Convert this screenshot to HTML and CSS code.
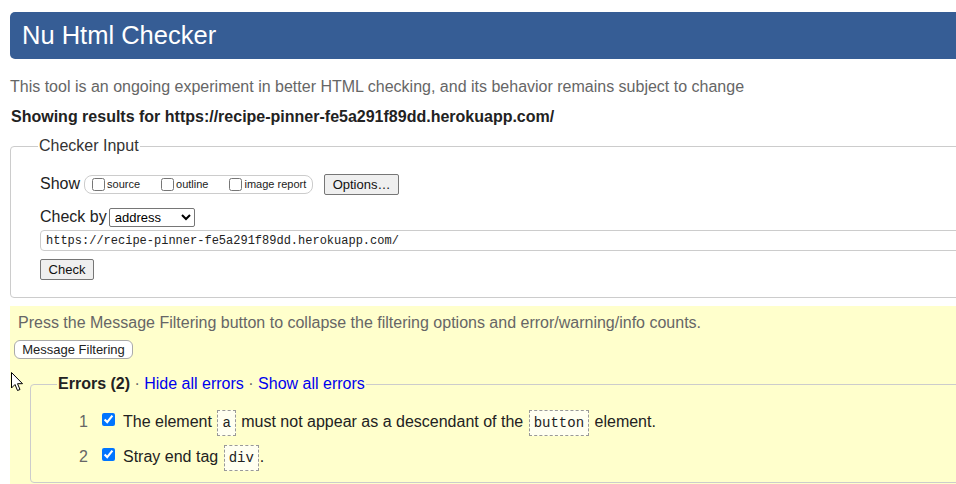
FILE: index.html
```html
<!DOCTYPE html>
<html lang="en">
<head>
<meta charset="utf-8">
<title>Nu Html Checker</title>
<link rel="stylesheet" href="styles.css">
</head>
<body>
<div class="page">
  <h1 class="title">Nu Html Checker</h1>
  <p class="intro">This tool is an ongoing experiment in better HTML checking, and its behavior remains subject to change</p>
  <p class="showing">Showing results for https://recipe-pinner-fe5a291f89dd.herokuapp.com/</p>

  <fieldset class="panel">
    <legend class="panel-legend">Checker Input</legend>
    <div class="row">
      <span class="row-label">Show</span>
      <span class="opts">
        <label class="opt"><input type="checkbox" class="cb"><span>source</span></label>
        <label class="opt"><input type="checkbox" class="cb"><span>outline</span></label>
        <label class="opt"><input type="checkbox" class="cb"><span>image report</span></label>
      </span>
      <button class="btn btn-options">Options…</button>
    </div>
    <div class="row row-by">
      <span class="row-label by-label">Check by</span>
      <select class="sel"><option>address</option></select>
    </div>
    <input class="url" type="text" value="https://recipe-pinner-fe5a291f89dd.herokuapp.com/">
    <div class="row-check"><button class="btn btn-check">Check</button></div>
  </fieldset>

  <div class="filters">
    <p class="filter-note">Press the Message Filtering button to collapse the filtering options and error/warning/info counts.</p>
    <button class="btn-filter">Message Filtering</button>
    <fieldset class="errors">
      <legend class="errors-legend"><strong>Errors (2)</strong> · <a href="#">Hide all errors</a> · <a href="#">Show all errors</a></legend>
      <ol class="list">
        <li class="item"><span class="num">1</span><input type="checkbox" class="cb-on" checked><span>The element <code>a</code> must not appear as a descendant of the <code>button</code> element.</span></li>
        <li class="item"><span class="num">2</span><input type="checkbox" class="cb-on" checked><span>Stray end tag <code>div</code>.</span></li>
      </ol>
    </fieldset>
  </div>
</div>
<svg class="cursor" width="13" height="20" viewBox="0 0 13 20"><path d="M0.5 0.5 L0.5 16 L4 12.5 L6.5 18.5 L9 17.5 L6.5 11.7 L11.5 11.7 Z" fill="#fff" stroke="#000" stroke-width="1" stroke-linejoin="miter"/></svg>
</body>
</html>
```

FILE: styles.css
```css
html, body {
  margin: 0;
  padding: 0;
  background: #fff;
  overflow: hidden;
}
body {
  font-family: "Liberation Sans", Arial, sans-serif;
  font-size: 16px;
  color: #222;
  position: relative;
  height: 484px;
}
.page {
  width: 1100px;
  padding: 12px 0 0 10px;
}
.title {
  margin: 0;
  height: 47px;
  background: #365d95;
  color: #fff;
  font-weight: normal;
  font-size: 25.5px;
  line-height: 47px;
  padding-left: 12px;
  border-radius: 5px;
}
.intro {
  margin: 18px 0 0 0;
  color: #666;
  line-height: 20px;
}
.showing {
  margin: 10px 0 0 1px;
  font-weight: bold;
  line-height: 20px;
}
.panel {
  margin: 10px 0 0 0;
  border: 1px solid #ccc;
  border-radius: 4px;
  padding: 6px 0 17px 29px;
  min-width: 0;
}
.panel-legend {
  margin-left: -2px;
  padding: 0 1px;
  color: #333;
  font-size: 16px;
}
.row {
  display: flex;
  align-items: center;
  height: 22px;
  margin-top: 12px;
}
.row-label {
  margin-right: 4px;
}
.by-label {
  margin-right: 2px;
}
.opts {
  display: flex;
  align-items: center;
  height: 17px;
  border: 1px solid #ccc;
  border-radius: 8px;
  padding: 0 5px 0 7px;
  width: 215px;
  box-sizing: content-box;
}
.opt {
  display: flex;
  align-items: center;
  font-size: 11px;
  margin-right: 21px;
}
.opt:last-child { margin-right: 0; }
.cb {
  width: 13px;
  height: 13px;
  margin: 0 2px 0 0;
}
.btn {
  font-family: "Liberation Sans", Arial, sans-serif;
  font-size: 13px;
  color: #111;
  background: #efefef;
  border: 1px solid #767676;
  border-radius: 2px;
  padding: 0 6px;
  height: 21px;
}
.btn-options {
  margin-left: 11px;
  width: 75px;
}
.row-by {
  margin-top: 12px;
  height: 20px;
}
.sel {
  font-family: "Liberation Sans", Arial, sans-serif;
  font-size: 13px;
  width: 86px;
  height: 19px;
  padding: 0 0 0 1px;
  border: 1px solid #767676;
  border-radius: 2px;
  background: #fff;
  color: #000;
}
.url {
  display: block;
  box-sizing: border-box;
  margin-top: 3px;
  width: 1000px;
  height: 21px;
  border: 1px solid #ccc;
  border-radius: 4px;
  padding: 0 5px;
  font-family: "Liberation Mono", monospace;
  font-size: 12px;
  color: #222;
  background: #fff;
}
.row-check {
  margin-top: 8px;
}
.btn-check {
  width: 54px;
  height: 21px;
  font-size: 13px;
  padding: 0;
}
.filters {
  margin-top: 8px;
  background: #ffffcc;
  padding: 7px 0 8px 4px;
  height: 200px;
}
.filter-note {
  margin: 0 0 0 4px;
  color: #666;
  line-height: 20px;
}
.btn-filter {
  margin-top: 7px;
  font-family: "Liberation Sans", Arial, sans-serif;
  font-size: 13px;
  color: #222;
  background: #fff;
  border: 1px solid #aaa;
  border-radius: 6px;
  height: 19px;
  padding: 0 6px;
  width: 119px;
}
.errors {
  margin: 16px 0 0 16px;
  border: 1px solid #ccc;
  border-radius: 4px;
  padding: 15px 0 4px 0;
  min-width: 0;
}
.errors-legend {
  margin-left: 26px;
  padding: 0 1px;
  color: #666;
}
.errors-legend strong { color: #222; }
.errors-legend a {
  color: #0000ee;
  text-decoration: none;
}
.list {
  list-style: none;
  margin: 0;
  padding: 0;
}
.item {
  display: flex;
  align-items: center;
  height: 28px;
  margin-bottom: 7px;
}
.num {
  width: 57px;
  text-align: right;
  color: #666;
  margin-right: 14px;
}
.cb-on {
  width: 13px;
  height: 13px;
  margin: 0 8px 0 0;
  position: relative;
  top: -3px;
}
code {
  font-family: "Liberation Mono", monospace;
  font-size: 14px;
  border: 1px dashed #999;
  padding: 4px 4px;
  margin: 0 1px;
  background: #fffff0;
}
.cursor {
  position: absolute;
  left: 11px;
  top: 372px;
}
```
